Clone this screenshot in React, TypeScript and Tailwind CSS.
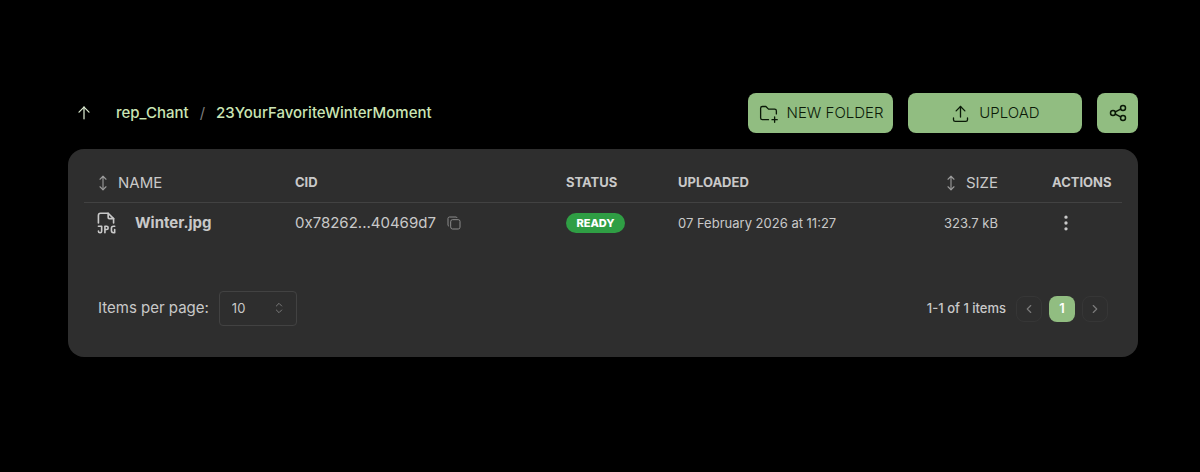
import { useState } from "react"
import {
  TbArrowUp,
  TbArrowsVertical,
  TbChevronLeft,
  TbChevronRight,
  TbCopy,
  TbDotsVertical,
  TbFileTypeJpg,
  TbFolderPlus,
  TbSelector,
  TbShare,
  TbUpload,
} from "react-icons/tb"

const files = [
  {
    name: "Winter.jpg",
    cid: "0x78262...40469d7",
    status: "READY",
    uploaded: "07 February 2026 at 11:27",
    size: "323.7 kB",
  },
]

const actionButton = "flex h-10 items-center justify-center gap-2 rounded-lg bg-[#91bd81] text-[15px] font-light text-[#0b1a08]"
const pagerButton = "flex size-[26px] items-center justify-center rounded-lg border border-[#363636] text-[#7a7a7a]"

function Toolbar() {
  return (
    <div className="flex items-center justify-between">
      <nav aria-label="Breadcrumb" className="flex items-center pl-[6px] text-[15px] font-medium text-[#cbe5b4]">
        <button aria-label="Up one level" className="mr-[22px] text-[#dcebd0]">
          <TbArrowUp size={20} strokeWidth={1.5} />
        </button>
        <a href="#root">rep_Chant</a>
        <span className="px-[11px] font-normal text-[#7c7c7c]">/</span>
        <a href="#folder">23YourFavoriteWinterMoment</a>
      </nav>
      <div className="flex gap-[15px]">
        <button className={`${actionButton} w-[145px]`}>
          <TbFolderPlus size={21} strokeWidth={1.5} />
          NEW FOLDER
        </button>
        <button className={`${actionButton} w-[174px]`}>
          <TbUpload size={21} strokeWidth={1.5} />
          UPLOAD
        </button>
        <button aria-label="Share" className={`${actionButton} w-[41px]`}>
          <TbShare size={20} strokeWidth={1.8} />
        </button>
      </div>
    </div>
  )
}

function FileTable() {
  return (
    <table className="w-full table-fixed text-left">
      <thead>
        <tr className="h-[38px] border-b border-[#424242] text-[13px] font-extrabold">
          <th className="w-[197px] px-[14px]">
            <button className="flex items-center gap-[6px] text-[15px] font-normal">
              <TbArrowsVertical size={18} strokeWidth={1.5} className="-ml-1 text-[#9a9a9a]" />
              NAME
            </button>
          </th>
          <th className="w-[271px] px-[14px]">CID</th>
          <th className="w-[112px] px-[14px]">STATUS</th>
          <th className="px-[14px]">UPLOADED</th>
          <th className="w-[110px] px-[14px]">
            <button className="ml-auto flex items-center gap-[6px] text-[15px] font-normal">
              <TbArrowsVertical size={18} strokeWidth={1.5} className="text-[#9a9a9a]" />
              SIZE
            </button>
          </th>
          <th className="w-[110px] pl-10">ACTIONS</th>
        </tr>
      </thead>
      <tbody>
        {files.map((file) => (
          <tr key={file.name} className="h-[42px]">
            <td className="px-[14px]">
              <div className="flex items-center gap-4 text-[15px] font-bold">
                <TbFileTypeJpg size={26} strokeWidth={1.5} className="-ml-[5px]" />
                {file.name}
              </div>
            </td>
            <td className="px-[14px]">
              <div className="flex items-center gap-[10px] text-[15px]">
                {file.cid}
                <button aria-label="Copy CID" className="text-[#8a8a8a]">
                  <TbCopy size={16} strokeWidth={1.5} />
                </button>
              </div>
            </td>
            <td className="px-[14px]">
              <span className="flex h-5 w-[59px] items-center justify-center rounded-full bg-[#2f9e44] text-[11px] font-extrabold text-white">
                {file.status}
              </span>
            </td>
            <td className="px-[14px] text-[13px]">{file.uploaded}</td>
            <td className="px-[14px] text-right text-[13px]">{file.size}</td>
            <td className="pl-[44px]">
              <button aria-label="File actions" className="block">
                <TbDotsVertical size={20} />
              </button>
            </td>
          </tr>
        ))}
      </tbody>
    </table>
  )
}

function Pagination() {
  const [pageSize, setPageSize] = useState("10")

  return (
    <div className="flex items-center justify-between px-[14px]">
      <div className="flex items-center gap-[10px]">
        <label htmlFor="page-size" className="text-[15px]">
          Items per page:
        </label>
        <div className="relative">
          <select
            id="page-size"
            value={pageSize}
            onChange={(e) => setPageSize(e.target.value)}
            className="h-[35px] w-[78px] appearance-none rounded border border-[#424242] bg-transparent px-3 text-[13px]"
          >
            <option>10</option>
            <option>20</option>
            <option>50</option>
          </select>
          <TbSelector size={16} strokeWidth={1.5} className="pointer-events-none absolute top-[9px] right-[10px] text-[#7a7a7a]" />
        </div>
      </div>
      <div className="flex items-center text-[13px]">
        <span className="mr-[10px] font-medium">1-1 of 1 items</span>
        <div className="flex gap-[7px]">
          <button aria-label="Previous page" disabled className={pagerButton}>
            <TbChevronLeft size={14} />
          </button>
          <button className="size-[26px] rounded-lg bg-[#91bd81] font-semibold text-white">1</button>
          <button aria-label="Next page" disabled className={pagerButton}>
            <TbChevronRight size={14} />
          </button>
        </div>
      </div>
    </div>
  )
}

export default function App() {
  return (
    <main className="min-h-screen bg-black pt-[93px] pr-[62px] pb-10 pl-[68px] font-['Inter',sans-serif] text-[#c9c9c9]">
      <Toolbar />
      <section className="mt-4 rounded-2xl bg-[#2e2e2e] px-4 pt-[15px] pb-[31px]">
        <FileTable />
        <div className="mt-[47px]">
          <Pagination />
        </div>
      </section>
    </main>
  )
}
